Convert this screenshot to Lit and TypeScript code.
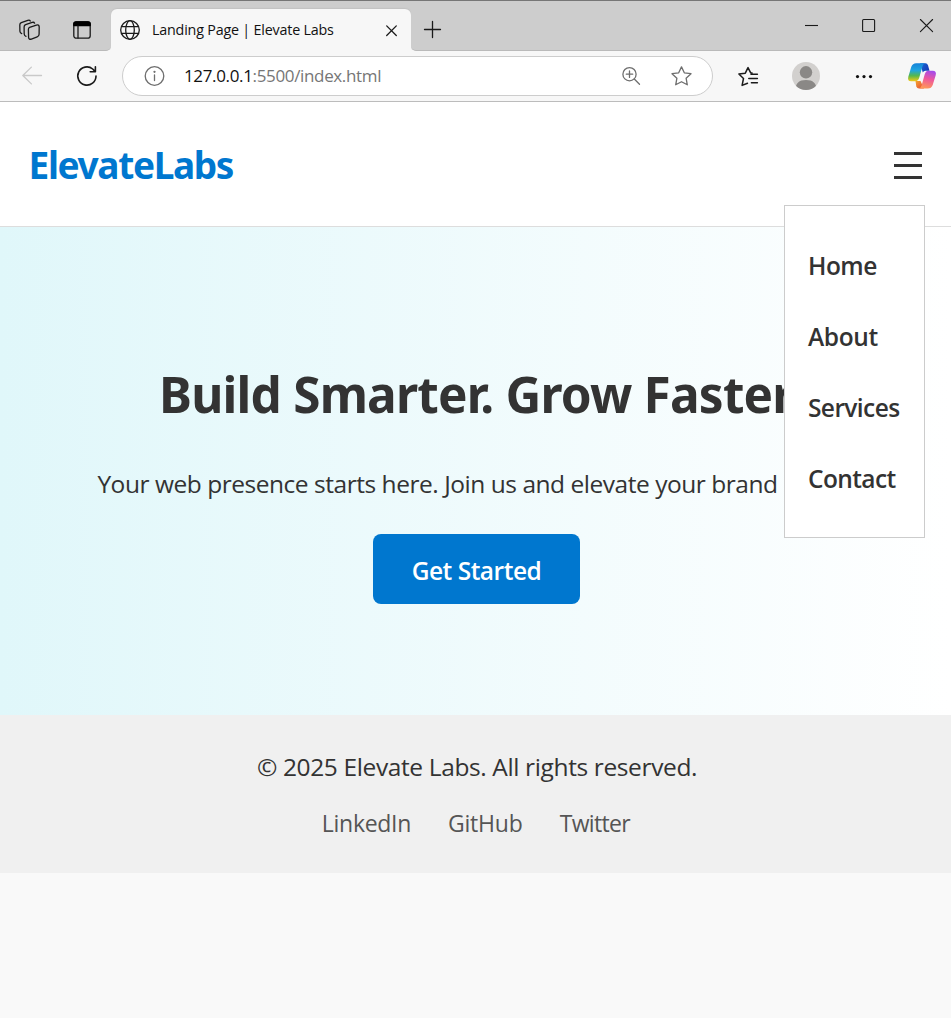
import { LitElement, html, css } from "lit";
import { customElement, state } from "lit/decorators.js";

@customElement("browser-chrome")
export class BrowserChrome extends LitElement {
  static styles = css`
    :host { display: block; height: 102px; box-sizing: border-box; background: #f7f7f7; border-bottom: 1px solid #bcbcbc; font-family: "Open Sans", sans-serif; }
    svg { display: block; flex: none; overflow: visible; fill: none; stroke: #1a1a1a; stroke-width: 1.3; stroke-linecap: round; stroke-linejoin: round; }
    .strip { display: flex; height: 51px; box-sizing: border-box; border-top: 1px solid #767676; }
    .lead, .rest { display: flex; align-items: center; background: #cdcdcd; box-sizing: border-box; border-bottom: 1px solid #bababa; padding-top: 9px; }
    .lead { width: 111px; border-bottom-right-radius: 5px; }
    .rest { flex: 1; border-bottom-left-radius: 5px; }
    .slot { display: flex; justify-content: center; align-items: center; flex: none; }
    .w44 { width: 44px; } .w54 { width: 54px; } .w56 { width: 56px; } .w59 { width: 59px; } .w60 { width: 60px; }
    .tabcell { width: 300px; padding-top: 8px; box-sizing: border-box; background: linear-gradient(#cdcdcd 25px, #f7f7f7 25px); }
    .tab { display: flex; align-items: center; height: 42px; background: #f7f7f7; border-radius: 6px 6px 0 0; padding: 0 14px 0 9px; box-shadow: 0 -1px 1px #c2c2c2; box-sizing: border-box; }
    .title { flex: 1; font-size: 14.3px; letter-spacing: -0.19px; color: #111; line-height: 20px; margin-left: 12px; white-space: nowrap; }
    .plus { margin-left: 13px; }
    .win { display: flex; margin-left: auto; gap: 45px; padding-right: 18px; padding-bottom: 10px; }
    .win svg:first-child { margin-right: -1px; }
    .bar { display: flex; align-items: center; height: 50px; padding-left: 4px; }
    .pill { display: flex; align-items: center; width: 591px; height: 40px; box-sizing: border-box; margin: 0 7px 0 8px; background: #fff; border: 1px solid #cdcdcd; border-radius: 20px; padding: 0 20px 0 20px; }
    .url { flex: 1; margin-left: 19px; font-size: 17px; letter-spacing: -0.35px; line-height: 24px; color: #767676; }
    .host { color: #111; }
    .zoom { margin-right: 31px; }
    .muted { stroke: #6e6e6e; }
    .faint { stroke: #c9c9c9; }
    .thin { stroke-width: 1.1; }
  `;
  render() {
    return html`
      <div class="strip">
        <div class="lead">
          <div class="slot w60"><svg width="22" height="22" viewBox="0 0 22 22">
            <path d="M10.6 8.4 17.4 6.1Q19.9 5.4 20.2 7.8L20.1 15.2Q20 17.3 18.2 17.9L12.4 20.1Q10 20.8 9.6 18.6L9.4 10.4Q9.4 8.9 10.6 8.4Z"/>
            <path d="M7 17.4Q5.3 16.8 5.2 15L5.1 8Q5.1 6.3 6.6 5.7L13.2 3.4Q15 2.8 15.6 4.2"/>
            <path d="M2.7 14.6Q1 14 .9 12.3L.8 5.9Q.8 4.2 2.3 3.6L8.8 1.3Q10.6.7 11.3 2"/></svg></div>
          <div class="slot w44"><svg width="18" height="18" viewBox="0 0 18 18"><rect x=".8" y=".8" width="16.4" height="16.4" rx="2.5"/><path d="M.8 4.500V3Q.8.8 3 .8H15Q17.2.8 17.2 3V4.500Z" fill="#000" stroke="#000"/><path d="M5 5V17"/></svg></div>
        </div>
        <div class="tabcell"><div class="tab">
          <svg width="20" height="20" viewBox="0 0 20 20"><circle cx="10" cy="10" r="9.3"/><ellipse cx="10" cy="10" rx="4.3" ry="9.3"/><path d="M1.6 6.6H18.4M1.6 13.4H18.4"/></svg>
          <div class="title">Landing Page | Elevate Labs</div>
          <svg width="11" height="11" viewBox="0 0 11 11"><path d="M.7.9 10.3 10.5M10.3.9.7 10.5"/></svg>
        </div></div>
        <div class="rest">
          <svg class="plus" width="18" height="18" viewBox="0 0 18 18"><path d="M8.500.5V16.500M.5 8.500H16.500"/></svg>
          <div class="win">
            <svg class="thin" width="13" height="14" viewBox="0 0 13 14"><path stroke-linecap="butt" d="M0 7.500H13"/></svg>
            <svg class="thin" width="13" height="14" viewBox="0 0 13 14"><rect x=".6" y="1.500" width="12" height="12" rx="1"/></svg>
            <svg class="thin" width="13" height="14" viewBox="0 0 13 14"><path d="M.4 1.500 12.600 13.700M12.600 1.500.4 13.700"/></svg>
          </div>
        </div>
      </div>
      <div class="bar">
        <div class="slot w56"><svg class="faint" width="20" height="18" viewBox="0 0 20 18"><path d="M19.500 8.500H.8M9.400.1.8 8.500 9.400 16.900"/></svg></div>
        <div class="slot w54"><svg width="20" height="20" viewBox="0 0 20 20"><path stroke-width="1.600" d="M19 10A9.100 9.100 0 1 1 15.700 3L18.200 5.600M18.400.7V5.800H13.200"/></svg></div>
        <div class="pill">
          <svg class="muted" width="22" height="20" viewBox="0 0 22 20"><circle cx="11.500" cy="10" r="9.300"/><path d="M11.500 9V14.600"/><circle cx="11.500" cy="5.800" r=".5" fill="#6e6e6e"/></svg>
          <div class="url"><span class="host">127.0.0.1</span>:5500/index.html</div>
          <svg class="muted zoom" width="18" height="18" viewBox="0 0 18 18"><circle cx="7.500" cy="7.200" r="6.600"/><path d="M7.500 4V10.400M4.300 7.200H10.700M12.300 12 17.500 17.200"/></svg>
          <svg class="muted" width="21" height="20" viewBox="0 0 21 20"><path d="M10.500.9 13.300 6.800 20 7.700 15.100 12.200 16.300 18.800 10.500 15.700 4.700 18.800 5.900 12.200 1 7.700 7.700 6.800Z"/></svg>
        </div>
        <div class="slot w56"><svg width="20" height="20" viewBox="0 0 20 20"><path d="M14 7 12.700 6.800 10 1.600 7.300 7.200.9 8 5.500 12.500 4.100 19.400 9.500 17.200M13 8.300H19.400M10.800 12.500H19.400M13.400 16.800H19.400" stroke-width="1.500"/></svg></div>
        <div class="slot w60"><svg width="28" height="28" viewBox="0 0 28 28">
          <defs><clipPath id="av"><circle cx="14" cy="14" r="14"/></clipPath></defs>
          <g clip-path="url(#av)" stroke="none"><rect width="28" height="28" fill="#d2d0ce"/><circle cx="14" cy="10.300" r="6.200" fill="#8a8886"/><path d="M3.500 28C3.500 21 7 18 14 18S24.500 21 24.500 28Z" fill="#8a8886"/></g></svg></div>
        <div class="slot w56"><svg width="18" height="4" viewBox="0 0 18 4"><g fill="#111" stroke="none"><circle cx="2.500" cy="2.600" r="1.600"/><circle cx="9" cy="2.600" r="1.600"/><circle cx="15.500" cy="2.600" r="1.600"/></g></svg></div>
        <div class="slot w59"><svg width="28" height="26" viewBox="0 0 28 26">
          <defs>
            <linearGradient id="cb" x1="0" y1="0" x2="0" y2="1"><stop offset="0" stop-color="#1683d9"/><stop offset=".4" stop-color="#1fa6e0"/><stop offset=".7" stop-color="#56b84c"/><stop offset="1" stop-color="#f3c917"/></linearGradient>
            <linearGradient id="cd" x1="0" y1="0" x2="1" y2=".6"><stop offset="0" stop-color="#1569d2"/><stop offset="1" stop-color="#183ab8"/></linearGradient>
            <linearGradient id="cp" x1=".6" y1="0" x2=".35" y2="1"><stop offset="0" stop-color="#a64bea"/><stop offset=".45" stop-color="#ee589c"/><stop offset="1" stop-color="#ff9b55"/></linearGradient>
            <linearGradient id="co" x1="0" y1="0" x2="1" y2="1"><stop offset="0" stop-color="#f4a52c"/><stop offset="1" stop-color="#e6443b"/></linearGradient>
          </defs>
          <g stroke="none">
            <path d="M12 .3H17.500Q19.300.3 20 2.300L21.500 7.800H17.500Q15.500 7.800 14.800 9.600Z" fill="url(#cd)"/>
            <path d="M7.500 18H12.500L16 25.600H11Q9 25.600 8.300 23.500Z" fill="url(#co)"/>
            <path d="M8.200.3H17.200Q15.300.7 14.400 3.400L11.200 14.800Q10.300 18.200 7.200 18.200H3.200Q-.8 18.200.3 13.700L3.300 3.800Q4.600.3 8.200.3Z" fill="url(#cb)"/>
            <path d="M19.800 25.600H10.800Q12.700 25.200 13.600 22.500L16.800 11.100Q17.700 7.700 20.800 7.700H24.800Q28.800 7.700 27.700 12.200L24.700 22.100Q23.400 25.600 19.800 25.600Z" fill="url(#cp)"/>
          </g></svg></div>
      </div>
    `;
  }
}

@customElement("app-root")
export class AppRoot extends LitElement {
  static styles = css`
    :host { display: block; min-height: 100vh; background: #f9f9f9; color: #333; font-family: "Open Sans", sans-serif; font-size: 24.5px; }
    a { color: inherit; text-decoration: none; }
    .header { position: relative; display: flex; align-items: center; justify-content: space-between; height: 125px; box-sizing: border-box; padding: 1px 29px 0 28.5px; background: #fff; border-bottom: 1px solid #ddd; }
    .logo { font-family: "Noto Sans", sans-serif; font-weight: 700; font-size: 37px; letter-spacing: -1.34px; line-height: 50px; color: #0077cf; }
    .burger { display: grid; gap: 9px; padding: 0; margin-top: 2px; border: 0; background: none; width: 28px; }
    .burger span { height: 3px; background: #333; }
    .menu { position: absolute; z-index: 1; top: 103px; right: 26px; width: 141px; height: 333px; box-sizing: border-box; background: #fff; border: 1px solid #ccc; padding: 24px 23px; display: flex; flex-direction: column; font-weight: 600; line-height: 71px; white-space: nowrap; }
    .home { letter-spacing: -0.5px; } .about { letter-spacing: -0.35px; } .services { letter-spacing: -0.6px; } .contact { letter-spacing: -0.6px; }
    .hero { display: flex; flex-direction: column; align-items: center; height: 488px; box-sizing: border-box; padding-top: 133px; background: linear-gradient(to right, #e0f7fa, #fff); white-space: nowrap; }
    .headline { margin: 0; padding-left: 7px; font-family: "Noto Sans", sans-serif; font-size: 49.5px; letter-spacing: -0.79px; line-height: 68px; font-weight: 700; }
    .lede { margin: 36px 0 30px; padding-left: 4px; line-height: 40px; letter-spacing: -0.465px; }
    .cta { width: 207px; height: 70px; box-sizing: border-box; margin-left: 2px; padding-top: 2px; border-radius: 8px; background: #0077cf; color: #fff; font-weight: 600; line-height: 69px; letter-spacing: -0.49px; text-align: center; }
    .footer { height: 158px; box-sizing: border-box; padding-top: 32px; background: #f0f0f0; text-align: center; }
    .copy { margin: 0; padding-left: 3px; line-height: 40px; letter-spacing: -0.373px; }
    .links { display: flex; justify-content: center; gap: 37px; margin-top: 16px; padding-left: 1px; font-size: 23px; line-height: 40px; color: #555; }
    .li { letter-spacing: -0.3px; } .gh { letter-spacing: -0.2px; } .tw { letter-spacing: -0.65px; }
  `;
  @state() private open = true;
  render() {
    return html`
      <browser-chrome></browser-chrome>
      <header class="header">
        <div class="logo">ElevateLabs</div>
        <button class="burger" aria-label="Menu" @click=${() => (this.open = !this.open)}><span></span><span></span><span></span></button>
        ${this.open ? html`<nav class="menu">
          ${["Home", "About", "Services", "Contact"].map((t) => html`<a class=${t.toLowerCase()} href="#">${t}</a>`)}
        </nav>` : null}
      </header>
      <section class="hero">
        <h1 class="headline">Build Smarter. Grow Faster.</h1>
        <p class="lede">Your web presence starts here. Join us and elevate your brand online.</p>
        <a class="cta" href="#">Get Started</a>
      </section>
      <footer class="footer">
        <p class="copy">© 2025 Elevate Labs. All rights reserved.</p>
        <div class="links"><a class="li" href="#">LinkedIn</a><a class="gh" href="#">GitHub</a><a class="tw" href="#">Twitter</a></div>
      </footer>
    `;
  }
}
